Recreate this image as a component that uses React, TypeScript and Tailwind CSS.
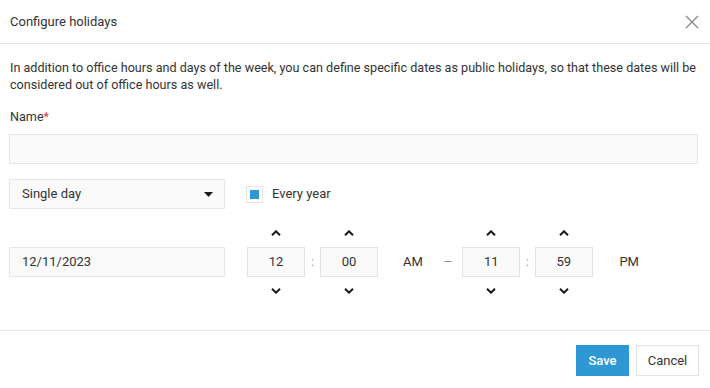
import React from 'react';

const font = { fontFamily: 'Roboto, "Liberation Sans", sans-serif' };

function Chevron({ up = false }: { up?: boolean }) {
  return (
    <svg width="10" height="6" viewBox="0 0 10 6" className="block">
      <path
        d={up ? 'M1 5.2 L5 1.3 L9 5.2' : 'M1 0.8 L5 4.7 L9 0.8'}
        fill="none"
        stroke="#1a1a1a"
        strokeWidth="2"
      />
    </svg>
  );
}

function Spinner({ value }: { value: string }) {
  return (
    <div className="flex flex-col items-center">
      <Chevron up />
      <div className="my-[11px] flex h-[30px] w-[58px] items-center justify-center border border-[#e3e3e3] bg-[#fafafa] text-[13px] text-[#333]">
        {value}
      </div>
      <Chevron />
    </div>
  );
}

export default function App() {
  return (
    <div className="h-[388px] w-[710px] bg-white text-[#333]" style={font}>
      {/* Header */}
      <div className="flex h-[44px] items-center justify-between border-b border-[#e8e8e8] pl-[10px] pr-[11px]">
        <h1 className="text-[13px]">Configure holidays</h1>
        <svg width="14" height="14" viewBox="0 0 14 14">
          <path d="M1 1 L13 13 M13 1 L1 13" stroke="#8a8a8a" strokeWidth="1.4" />
        </svg>
      </div>

      {/* Body */}
      <div className="h-[287px] border-b border-[#e8e8e8] px-[9px]">
        <p className="pl-[1px] pt-[15px] text-[12.6px] leading-[17px]">
          In addition to office hours and days of the week, you can define specific dates as public holidays, so that
          these dates will be considered out of office hours as well.
        </p>

        <label className="mt-[15px] block pl-[1px] text-[12.6px] leading-[17px]">
          Name<span className="text-[#e03a3a]">*</span>
        </label>
        <div className="mt-[9px] h-[30px] w-[689px] border border-[#e6e6e6] bg-[#fafafa]" />

        <div className="mt-[15px] flex items-center">
          <div className="flex h-[30px] w-[216px] items-center justify-between border border-[#e6e6e6] bg-[#fafafa] pl-[12px] pr-[11px] text-[13px]">
            Single day
            <svg width="9" height="5" viewBox="0 0 9 5">
              <path d="M0 0 H9 L4.5 5 Z" fill="#1a1a1a" />
            </svg>
          </div>
          <div className="ml-[21px] flex items-center">
            <div className="flex h-[17px] w-[17px] items-center justify-center border border-[#e3e3e3] bg-white">
              <div className="h-[9px] w-[9px] bg-[#2d98d4]" />
            </div>
            <span className="ml-[9px] text-[13px]">Every year</span>
          </div>
        </div>

        <div className="mt-[21px] flex items-center">
          <div className="flex h-[30px] w-[216px] items-center border border-[#e6e6e6] bg-[#fafafa] pl-[12px] text-[13px]">
            12/11/2023
          </div>
          <div className="ml-[22px]">
            <Spinner value="12" />
          </div>
          <span className="w-[15px] text-center text-[12px] text-[#999]">:</span>
          <Spinner value="00" />
          <span className="ml-[25px] text-[13px]">AM</span>
          <span className="ml-[21px] text-[13px] text-[#888]">–</span>
          <div className="ml-[10px]">
            <Spinner value="11" />
          </div>
          <span className="w-[14px] text-center text-[12px] text-[#999]">:</span>
          <div className="w-[59px] flex justify-center">
            <Spinner value="59" />
          </div>
          <span className="ml-[26px] text-[13px]">PM</span>
        </div>
      </div>

      {/* Footer */}
      <div className="flex justify-end gap-[7px] pr-[11px] pt-[14px]">
        <button className="h-[31px] w-[53px] bg-[#2d98d4] text-[13px] font-medium text-white">Save</button>
        <button className="h-[31px] w-[63px] border border-[#e3e3e3] bg-white text-[13px] text-[#333]">
          Cancel
        </button>
      </div>
    </div>
  );
}
